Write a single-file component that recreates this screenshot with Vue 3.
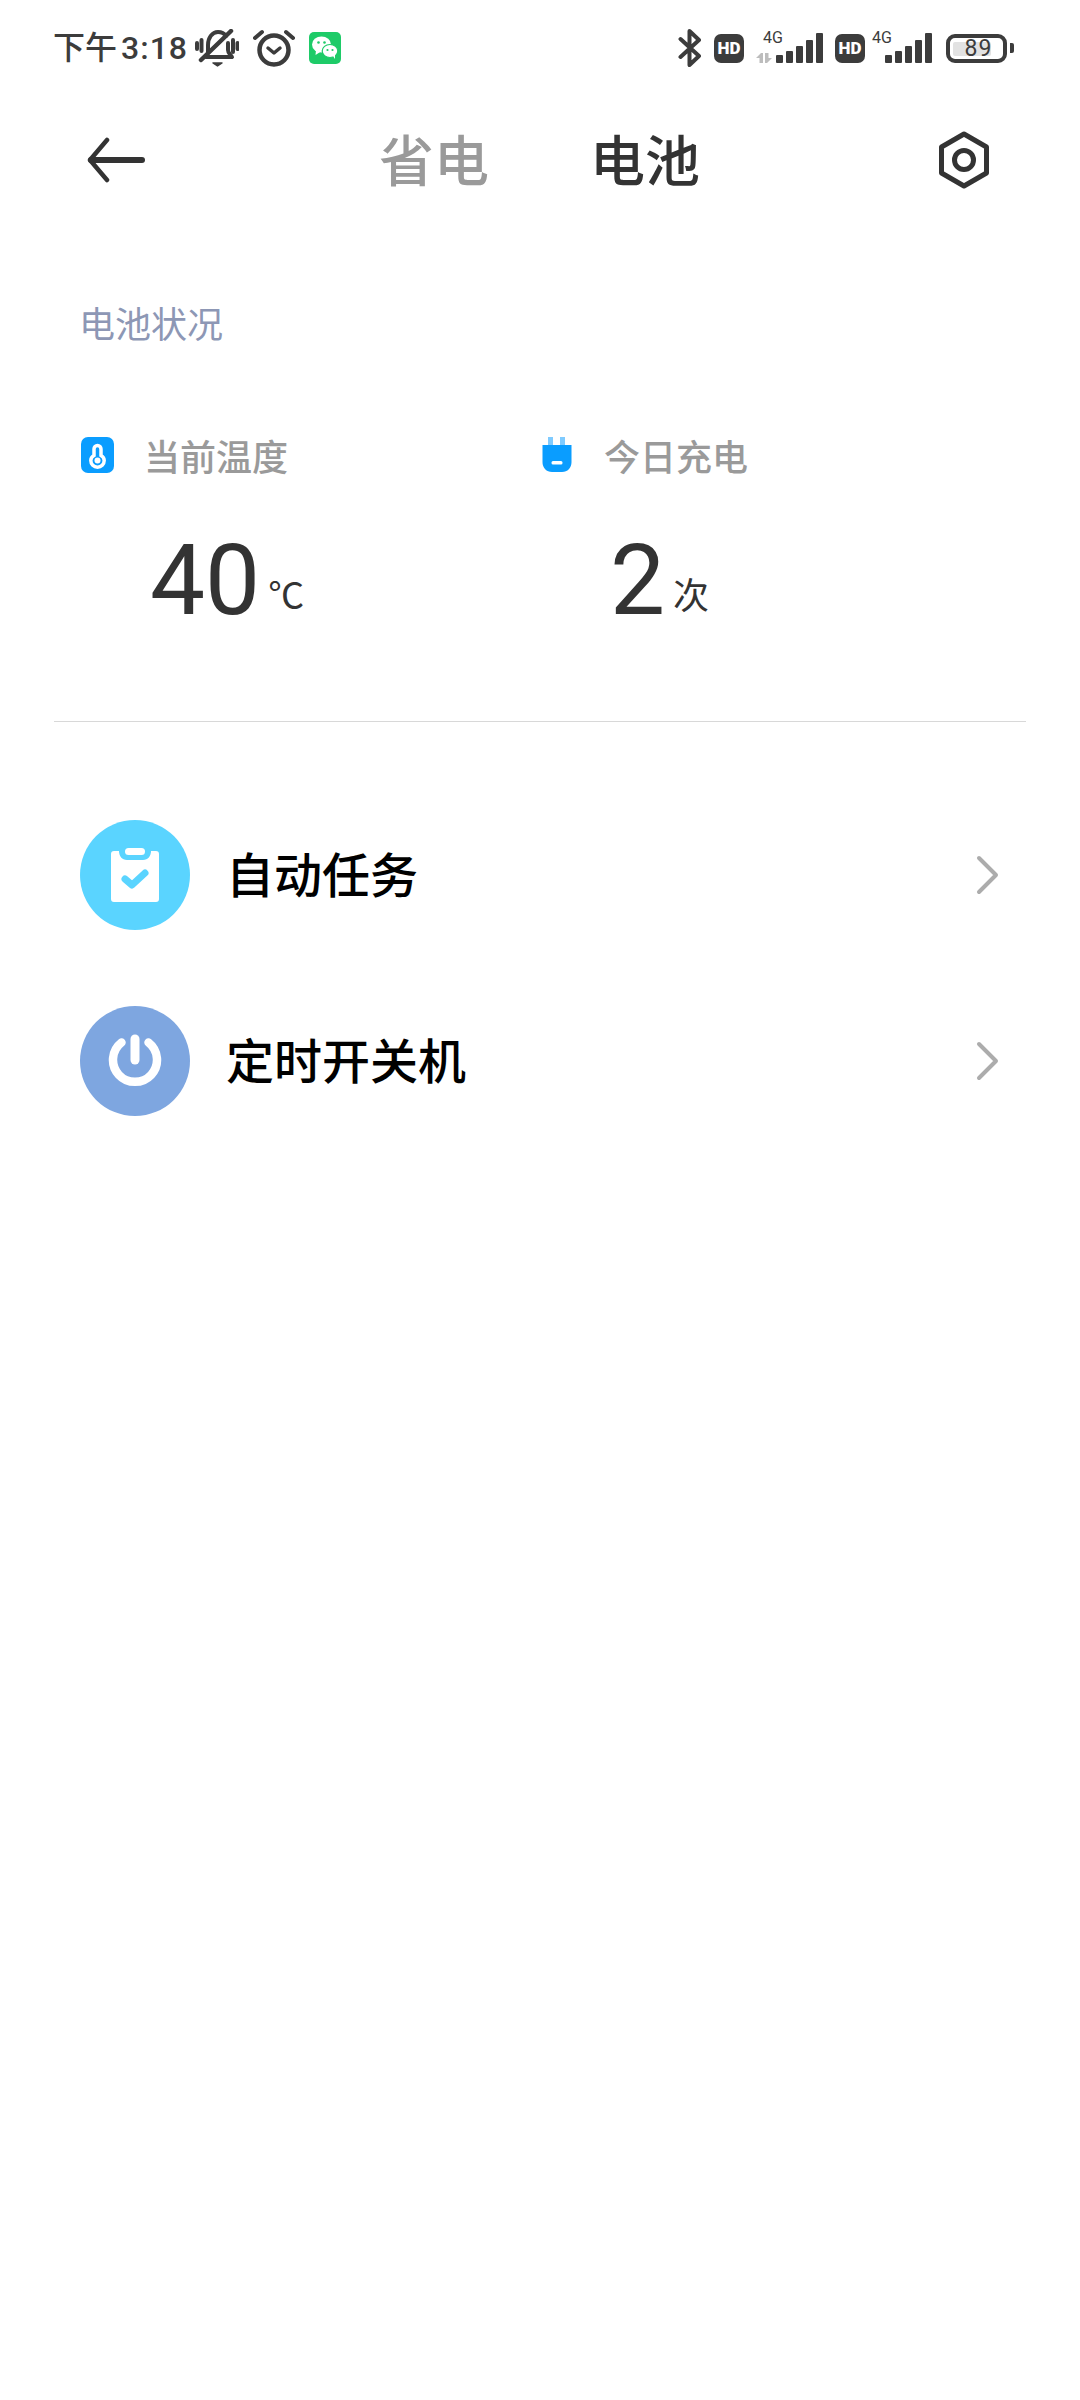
<template>
  <div class="page">
    <!-- status bar -->
    <div class="status">
      <div class="status-left">
        <span class="time">下午<span class="digits">3:18</span></span>
        <svg class="ic-bell" width="44" height="38" viewBox="0 0 44 38" fill="none" stroke="#3c3c3c" stroke-width="4" stroke-linecap="round" stroke-linejoin="round">
          <path d="M13 24V16C13 9 17 3 23 3C26 3 29 4 31 7" />
          <path d="M33 14V21C33 24 35 25 37 28H11" />
          <path d="M6 31L36 2" stroke-width="4.500" />
          <path d="M2 14V20M6.500 11V22M38 11V23M42.500 14V20" />
          <path d="M18 34H27L22.500 37Z" fill="#3c3c3c" stroke-width="1.500" />
        </svg>
        <svg class="ic-alarm" width="42" height="38" viewBox="0 0 42 38" fill="none" stroke="#3c3c3c" stroke-linecap="round" stroke-linejoin="round">
          <circle cx="21" cy="21" r="14.500" stroke-width="4.500" />
          <path d="M15 19L21 24L27 19" stroke-width="3.500" />
          <path d="M2 9L9 3M40 9L33 3" stroke-width="4" />
        </svg>
        <svg class="ic-wechat" width="32" height="32" viewBox="0 0 32 32">
          <rect width="32" height="32" rx="5" fill="#1ecb68" />
          <ellipse cx="12.500" cy="12.500" rx="9.500" ry="8" fill="#fff" />
          <path d="M7 18L6.500 23L12 19.500Z" fill="#fff" />
          <ellipse cx="21" cy="19" rx="7.800" ry="6.500" fill="#fff" stroke="#1ecb68" stroke-width="1.200" />
          <path d="M24 24L26 27L26 22Z" fill="#fff" />
          <circle cx="9.500" cy="10.500" r="1.300" fill="#1ecb68" />
          <circle cx="15.500" cy="10.500" r="1.300" fill="#1ecb68" />
          <circle cx="18.500" cy="18" r="1.100" fill="#1ecb68" />
          <circle cx="23.500" cy="18" r="1.100" fill="#1ecb68" />
        </svg>
      </div>
      <div class="status-right">
        <svg class="ic-bt" width="24" height="38" viewBox="0 0 24 38" fill="none" stroke="#3c3c3c" stroke-width="4" stroke-linecap="round" stroke-linejoin="round">
          <path d="M2.500 10L21 27L11.500 36V2L21 11L2.500 28" />
        </svg>
        <span class="hd">HD</span>
        <div class="sim sim-1">
          <span class="net">4G</span>
          <svg class="arrows" width="16" height="10" viewBox="0 0 16 10" fill="#bdbdbd">
            <path d="M3.500 10V5H0L5 0H7V10ZM9 0V10H11L16 5H12.500V0Z" />
          </svg>
          <svg class="bars" width="47" height="30" viewBox="0 0 47 30" fill="#3c3c3c">
            <rect x="0" y="22" width="7" height="8" rx="1" />
            <rect x="10" y="18" width="7" height="12" rx="1" />
            <rect x="20" y="13" width="7" height="17" rx="1" />
            <rect x="30" y="7" width="7" height="23" rx="1" />
            <rect x="40" y="0" width="7" height="30" rx="1" />
          </svg>
        </div>
        <span class="hd">HD</span>
        <div class="sim sim-2">
          <span class="net">4G</span>
          <svg class="bars" width="47" height="30" viewBox="0 0 47 30" fill="#3c3c3c">
            <rect x="0" y="22" width="7" height="8" rx="1" />
            <rect x="10" y="18" width="7" height="12" rx="1" />
            <rect x="20" y="13" width="7" height="17" rx="1" />
            <rect x="30" y="7" width="7" height="23" rx="1" />
            <rect x="40" y="0" width="7" height="30" rx="1" />
          </svg>
        </div>
        <div class="battery">
          <div class="battery-box">
            <div class="battery-fill" :style="{ width: level + '%' }"></div>
            <span class="battery-num">{{ level }}</span>
          </div>
          <div class="battery-nub"></div>
        </div>
      </div>
    </div>

    <!-- nav -->
    <div class="nav">
      <svg width="60" height="46" viewBox="0 0 60 46" fill="none" stroke="#333" stroke-width="6" stroke-linecap="round" stroke-linejoin="round">
        <path d="M5 23H56" />
        <path d="M21 3L4 23L21 43" stroke-width="4.500" />
      </svg>
      <div class="tabs">
        <span class="tab">省电</span>
        <span class="tab on">电池</span>
      </div>
      <svg width="52" height="58" viewBox="0 0 52 58" fill="none" stroke="#333" stroke-width="5" stroke-linejoin="round">
        <path d="M26 3L48.500 16V42L26 55L3.500 42V16Z" />
        <circle cx="26" cy="29" r="9.500" />
      </svg>
    </div>

    <div class="section">电池状况</div>

    <div class="stats">
      <div class="stat" v-for="s in stats" :key="s.label">
        <div class="stat-head">
          <svg v-if="s.icon === 'temp'" width="33" height="36" viewBox="0 0 33 36">
            <rect width="33" height="36" rx="7" fill="#0a9dff" />
            <path d="M16.500 8.500C14.500 8.500 13 10 13 12V18.500C11 19.600 9.800 21.500 9.800 23.500C9.800 27.200 12.800 30.200 16.500 30.200C20.200 30.200 23.200 27.200 23.200 23.500C23.200 21.500 22 19.600 20 18.500V12C20 10 18.500 8.500 16.500 8.500Z" fill="none" stroke="#fff" stroke-width="3.500" />
            <circle cx="16.500" cy="23.500" r="3" fill="#fff" />
          </svg>
          <svg v-else width="33" height="36" viewBox="0 0 33 36">
            <rect x="7" y="0" width="5" height="9" fill="#7fcbff" />
            <rect x="19" y="0" width="5" height="9" fill="#7fcbff" />
            <path d="M1.500 8H30.500V25C30.500 31 26.500 35 21 35H11C5.500 35 1.500 31 1.500 25Z" fill="#0a9dff" />
            <rect x="10.500" y="24" width="11" height="3.500" rx="1.500" fill="#fff" />
          </svg>
          <span>{{ s.label }}</span>
        </div>
        <div class="stat-val">
          <span class="num">{{ s.value }}</span>
          <span class="unit">{{ s.unit }}</span>
        </div>
      </div>
    </div>

    <div class="line"></div>

    <div class="list">
      <div class="row">
        <div class="circle c1">
          <svg width="50" height="56" viewBox="0 0 50 56">
            <path d="M4 4H9C9 9 12 13 17 13H33C38 13 41 9 41 4H46C48 4 49 5 49 7V52C49 54 48 55 46 55H4C2 55 1 54 1 52V7C1 5 2 4 4 4Z" fill="#fff" />
            <rect x="15" y="1" width="20" height="7" rx="3.500" fill="#fff" />
            <path d="M15 32L22 38L35 26" fill="none" stroke="#5ad4ff" stroke-width="7" stroke-linecap="round" stroke-linejoin="round" />
          </svg>
        </div>
        <span class="row-text">自动任务</span>
        <svg class="chev" width="24" height="40" viewBox="0 0 24 40" fill="none" stroke="#acacac" stroke-width="4" stroke-linecap="round" stroke-linejoin="round">
          <path d="M3 3L20 20L3 37" />
        </svg>
      </div>
      <div class="row">
        <div class="circle c2">
          <svg width="54" height="54" viewBox="0 0 54 54" fill="none" stroke="#fff" stroke-linecap="round">
            <path d="M13.500 8.500A22 22 0 1 0 40.500 8.500" stroke-width="8.500" />
            <path d="M27 5V26" stroke-width="9" />
          </svg>
        </div>
        <span class="row-text">定时开关机</span>
        <svg class="chev" width="24" height="40" viewBox="0 0 24 40" fill="none" stroke="#acacac" stroke-width="4" stroke-linecap="round" stroke-linejoin="round">
          <path d="M3 3L20 20L3 37" />
        </svg>
      </div>
    </div>
  </div>
</template>

<script setup>
const level = 89
const stats = [
  { icon: 'temp', label: '当前温度', value: '40', unit: '℃' },
  { icon: 'plug', label: '今日充电', value: '2', unit: '次' }
]
</script>

<style scoped>
.page { width: 1080px; height: 2400px; background: #fff; font-family: "Noto Sans CJK SC", Roboto, sans-serif; overflow: hidden; }

.status { height: 96px; padding: 0 66px 0 53px; display: flex; justify-content: space-between; align-items: center; box-sizing: border-box; }
.status-left, .status-right { display: flex; align-items: center; }
.time { font-family: Roboto, "Noto Sans CJK SC", sans-serif; font-size: 32px; font-weight: 500; color: #3c3c3c; line-height: 38px; width: 142px; white-space: nowrap; }
.digits { margin-left: 4px; letter-spacing: 1px; }
.ic-alarm { margin-left: 14px; }
.ic-wechat { margin-left: 14px; }
.hd { width: 30px; height: 29px; margin-left: 12px; background: #3c3c3c; border-radius: 7px; color: #fff; font: 900 17px/29px Roboto, sans-serif; text-align: center; }
.sim { position: relative; width: 67px; height: 30px; display: flex; align-items: flex-end; justify-content: flex-end; }
.sim-1 { margin-left: 12px; }
.net { position: absolute; left: 7px; top: -2px; font: 400 16px/14px Roboto, sans-serif; color: #3c3c3c; }
.arrows { position: absolute; left: 0; bottom: 0; }
.battery { margin-left: 14px; display: flex; align-items: center; gap: 3px; }
.battery-box { position: relative; width: 61px; height: 29px; box-sizing: border-box; border: 4px solid #3c3c3c; border-radius: 9px; padding: 4px 7px 3px 3px; }
.battery-fill { height: 100%; background: #e2e2e2; border-radius: 2px; }
.battery-num { position: absolute; left: 0; right: 0; top: 0; text-align: center; padding-left: 4px; font: 400 23px/21px Roboto, sans-serif; color: #3c3c3c; letter-spacing: 1px; }
.battery-nub { width: 4px; height: 10px; background: #3c3c3c; border-radius: 0 2px 2px 0; }

.nav { height: 128px; padding: 0 90px 0 86px; display: flex; justify-content: space-between; align-items: center; }
.tabs { display: flex; gap: 101px; margin: 0 5px 6px 0; }
.tab { font-size: 55px; line-height: 70px; font-weight: 500; color: #9a9a9a; }
.tab.on { color: #333; }

.section { margin: 76px 0 0 79px; font-size: 36px; line-height: 44px; color: #8d97b5; }

.stats { display: flex; margin: 91px 0 0 81px; }
.stat { width: 460px; }
.stat-head { display: flex; align-items: center; gap: 30px; height: 40px; font-size: 36px; font-weight: 500; color: #9a9a9a; }
.stat-val { display: flex; align-items: flex-end; margin: 46px 0 0 69px; color: #333; }
.num { font-family: Roboto, sans-serif; font-size: 98px; line-height: 120px; }
.unit { margin: 0 0 28px 8px; font-size: 36px; line-height: 40px; }

.line { height: 1px; margin: 80px 54px 0; background: #d8d8d8; }

.list { margin-top: 98px; padding: 0 80px; display: flex; flex-direction: column; gap: 76px; }
.row { display: flex; align-items: center; height: 110px; }
.circle { width: 110px; height: 110px; border-radius: 50%; display: flex; align-items: center; justify-content: center; flex: none; }
.c1 { background: #5ad4ff; }
.c2 { background: #7ea6e0; }
.row-text { margin: 0 0 6px 36px; flex: 1; font-size: 48px; font-weight: 500; color: #000; }
.chev { flex: none; }
</style>
